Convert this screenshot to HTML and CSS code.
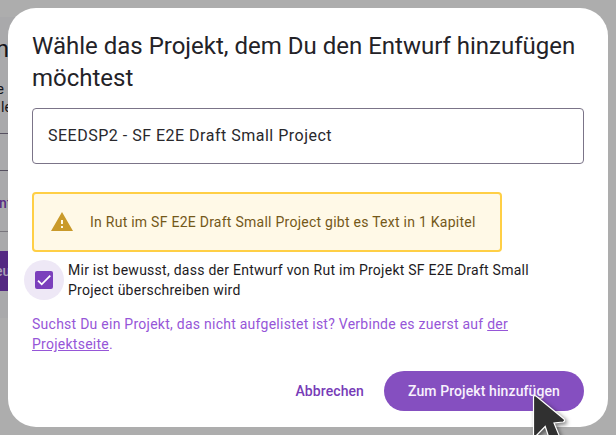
FILE: index.html
```html
<!DOCTYPE html>
<html lang="de">
<head>
<meta charset="utf-8">
<title>Projekt wählen</title>
<link rel="stylesheet" href="styles.css">
</head>
<body>
<div class="page">
  <aside class="backdrop-page">
    <div class="bg-heading">n</div>
    <div class="bg-copy"><span class="bg-line-a">e</span><span class="bg-line-b">le</span></div>
    <div class="bg-field"></div>
    <div class="bg-link">nt</div>
    <div class="bg-button">eu</div>
  </aside>
  <main class="dialog">
    <h1>Wähle das Projekt, dem Du den Entwurf hinzufügen möchtest</h1>
    <div class="field">SEEDSP2 - SF E2E Draft Small Project</div>
    <div class="notice">
      <svg class="warning" viewBox="0 0 24 24"><path d="M1 21h22L12 2 1 21zm12-3h-2v-2h2v2zm0-4h-2v-4h2v4z"/></svg>
      <span>In Rut im SF E2E Draft Small Project gibt es Text in 1 Kapitel</span>
    </div>
    <label class="confirm">
      <span class="ripple"><span class="box"><svg viewBox="0 0 24 24"><path d="M1.73 12.91 8.1 19.28 22.79 4.59"/></svg></span></span>
      <span class="confirm-text">Mir ist bewusst, dass der Entwurf von Rut im Projekt SF E2E Draft Small Project überschreiben wird</span>
    </label>
    <p class="hint">Suchst Du ein Projekt, das nicht aufgelistet ist? Verbinde es zuerst auf <a>der Projektseite</a>.</p>
    <div class="actions">
      <button class="cancel">Abbrechen</button>
      <button class="submit">Zum Projekt hinzufügen</button>
    </div>
  </main>
  <svg class="cursor" viewBox="0 0 44 44"><path d="M3.500 2.500Q4.500 1 6 2L34 25Q35.500 27.500 33 28L24 29L31 46L21 50L15.200 32.500L4.500 43.500L3.500 43Z"/></svg>
</div>
</body>
</html>
```

FILE: styles.css
```css
* { box-sizing: border-box; }
body {
  margin: 0;
  font-family: Roboto, sans-serif;
  font-size: 14px;
  line-height: 20px;
  color: #1d1b1e;
}
.page {
  position: relative;
  display: flex;
  width: 616px;
  height: 435px;
  overflow: hidden;
  background: #adadad;
}
.backdrop-page {
  width: 16px;
  height: 435px;
  margin-right: -8px;
  padding-top: 17px;
  overflow: hidden;
  background: linear-gradient(#adadad 17px, #a9a9ab 17px, #a9a9ab 318px, #adadad 318px);
  color: #141318;
}
.bg-heading {
  display: flex;
  justify-content: flex-end;
  height: 62px;
  margin-right: 7px;
  font-size: 24px;
  line-height: 64px;
}
.bg-copy { height: 54px; }
.bg-copy span { display: flex; height: 18px; line-height: 20px; }
.bg-copy .bg-line-a { justify-content: flex-end; margin-right: 12px; }
.bg-copy .bg-line-b { width: 12px; padding-left: 1px; }
.bg-field { height: 38px; border: solid #565160; border-width: 1px 0; }
.bg-link {
  height: 61px;
  padding-top: 22px;
  margin-left: -1px;
  border-bottom: 1px solid #79767d;
  color: #562b83;
  font-weight: 500;
  letter-spacing: .1px;
}
.bg-button {
  height: 40px;
  margin-top: 19px;
  text-indent: -5px;
  line-height: 40px;
  font-weight: 500;
  color: #aaa0b7;
  background: #542982;
}
.dialog {
  position: relative;
  display: flex;
  flex-direction: column;
  width: 600px;
  height: 419px;
  margin-top: 8px;
  padding: 22px 24px 16px;
  border-radius: 28px;
  background: #fff;
}
h1 {
  margin: 0 0 14px;
  font-size: 24px;
  line-height: 32px;
  font-weight: 400;
  color: #232227;
}
.field {
  height: 56px;
  padding: 0 15px;
  border: 1px solid #7b7488;
  border-radius: 4px;
  font-size: 16px;
  line-height: 54px;
  letter-spacing: .5px;
  color: #29282c;
}
.notice {
  display: flex;
  align-items: center;
  gap: 16px;
  width: 470px;
  height: 60px;
  margin-top: 28px;
  padding-left: 16px;
  border: 2px solid #ffcf45;
  border-radius: 4px;
  background: #fff9e7;
  color: #745819;
  letter-spacing: .256px;
}
.warning { width: 24px; height: 24px; fill: #c99a2b; }
.confirm { display: flex; height: 48px; margin: 8px 0 0 -8px; }
.ripple {
  display: flex;
  flex: none;
  align-items: center;
  justify-content: center;
  width: 40px;
  height: 40px;
  border-radius: 50%;
  background: #eee8f6;
}
.box {
  display: flex;
  align-items: center;
  justify-content: center;
  width: 18px;
  height: 18px;
  border-radius: 2px;
  background: #7b3fbc;
}
.box svg { width: 14px; height: 14px; fill: none; stroke: #fff; stroke-width: 3; }
.confirm-text { width: 475px; margin-left: 4px; letter-spacing: .256px; }
.hint { margin: 6px 0 0; letter-spacing: .256px; color: #9656d8; }
.hint a { text-decoration: underline; }
.actions { display: flex; justify-content: flex-end; gap: 8px; margin-top: 17px; }
button {
  height: 40px;
  padding: 0;
  border: 0;
  border-radius: 20px;
  font: 500 14px/20px Roboto, sans-serif;
  letter-spacing: .1px;
}
.cancel { width: 92.6px; background: none; color: #773bb7; }
.submit { width: 200px; background: #854fc0; color: #f8f2fd; }
.cursor {
  position: absolute;
  left: 530px;
  top: 394px;
  width: 44px;
  height: 44px;
  fill: #303030;
  stroke: #fff;
  stroke-width: 1.2;
  filter: drop-shadow(2px 2px 2px rgba(0, 0, 0, .5));
}
```
